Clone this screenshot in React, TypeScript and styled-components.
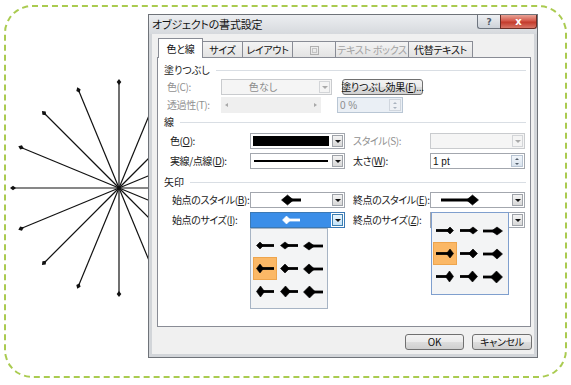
import React from 'react';
import styled, { createGlobalStyle } from 'styled-components';

const JP = `"Noto Sans CJK JP", "Noto Sans", sans-serif`;

const GlobalStyle = createGlobalStyle`
  html, body { margin: 0; padding: 0; background: #ffffff; }
  body { font-family: ${JP}; font-feature-settings: "palt"; }
  #root { width: 571px; height: 385px; overflow: hidden; }
  u { text-underline-offset: 1px; }
`;

const Frame = styled.div`
  box-sizing: border-box;
  margin: 5px 0 0 4px;
  width: 563px;
  height: 373px;
  border: 2px dashed #aacb50;
  border-radius: 28px;
  padding-top: 7px;
  display: flex;
  align-items: flex-start;
`;

const StarSvg = styled.svg`
  flex: none;
  display: block;
  width: 142px;
  height: 300px;
  overflow: visible;
`;

const StarFigure: React.FC = () => {
  const cx = 113;
  const cy = 174;
  const r = 106;
  const items = [];
  for (let i = 0; i < 16; i++) {
    const a = (i * Math.PI) / 8;
    const ux = Math.cos(a);
    const uy = -Math.sin(a);
    const x = cx + r * ux;
    const y = cy + r * uy;
    const px = -uy;
    const py = ux;
    const pts = [
      [x + ux * 3, y + uy * 3],
      [x + px * 2.3, y + py * 2.3],
      [x - ux * 3, y - uy * 3],
      [x - px * 2.3, y - py * 2.3],
    ]
      .map((p) => p.map((v) => v.toFixed(2)).join(','))
      .join(' ');
    items.push(
      <g key={i}>
        <line x1={cx} y1={cy} x2={x} y2={y} stroke="#111" strokeWidth={1.2} />
        <polygon points={pts} fill="#111" />
      </g>
    );
  }
  return <StarSvg viewBox="0 0 142 300">{items}</StarSvg>;
};

const Dialog = styled.div`
  position: relative;
  flex: none;
  box-sizing: border-box;
  width: 390px;
  height: 344px;
  border: 1px solid #6f7379;
  background: #d2d5d9;
  padding: 0 3px 3px;
  display: flex;
  flex-direction: column;
  font-family: ${JP};
`;

const TitleBar = styled.div`
  flex: none;
  height: 19px;
  margin: 0 -3px;
  padding-left: 3px;
  display: flex;
  align-items: flex-start;
  background: linear-gradient(#eceef1, #d6d9dd);
`;

const TitleText = styled.div`
  font-size: 11px;
  line-height: 19px;
  color: #141414;
  letter-spacing: -0.2px;
`;

const TitleButtons = styled.div`
  margin-left: auto;
  display: flex;
`;

const HelpButton = styled.div`
  box-sizing: border-box;
  width: 23px;
  height: 14px;
  border: 1px solid #6f7680;
  border-top: none;
  border-right: none;
  border-radius: 0 0 0 3px;
  background: linear-gradient(#eef0f3, #cdd2d9);
  color: #4f5966;
  font: bold 9px "DejaVu Sans", sans-serif;
  display: flex;
  align-items: center;
  justify-content: center;
`;

const CloseButton = styled.div`
  box-sizing: border-box;
  width: 37px;
  height: 14px;
  border: 1px solid #6b2c24;
  border-top: none;
  border-radius: 0 0 3px 0;
  background: linear-gradient(#e9a497, #d4584a 45%, #c33b2c 55%, #d87566);
  color: #ffffff;
  font: bold 10px "DejaVu Sans", sans-serif;
  display: flex;
  align-items: center;
  justify-content: center;
`;

const Body = styled.div`
  flex: 1;
  background: #f0f0f0;
  padding: 4px 3px 4px 5px;
  display: flex;
  flex-direction: column;
`;

const TabRow = styled.div`
  position: relative;
  z-index: 1;
  height: 20px;
  margin-bottom: -1px;
  padding-left: 1px;
  display: flex;
  align-items: flex-end;
`;

const Tab = styled.div<{ $w: number; $active?: boolean; $disabled?: boolean }>`
  box-sizing: border-box;
  flex: none;
  width: ${(p) => p.$w}px;
  height: ${(p) => (p.$active ? 20 : 17)}px;
  margin-right: -1px;
  border: 1px solid #898c95;
  border-bottom: ${(p) => (p.$active ? 'none' : '1px solid #898c95')};
  background: ${(p) => (p.$active ? '#ffffff' : 'linear-gradient(#f4f4f4, #e3e3e3)')};
  color: ${(p) => (p.$disabled ? '#a2a2a2' : '#111111')};
  font-size: 10px;
  line-height: 12px;
  letter-spacing: -0.3px;
  white-space: nowrap;
  display: flex;
  align-items: center;
  justify-content: center;
  padding-top: ${(p) => (p.$active ? 0 : 1)}px;
`;

const Panel = styled.div`
  position: relative;
  box-sizing: border-box;
  flex: none;
  width: 374px;
  height: 270px;
  border: 1px solid #898c95;
  background: #ffffff;
  padding: 5px 4px 0 6px;
  display: flex;
  flex-direction: column;
`;

const SectionHeading = styled.div<{ $mt: number }>`
  height: 14px;
  margin-top: ${(p) => p.$mt}px;
  display: flex;
  align-items: center;
  gap: 6px;
  font-size: 10px;
  line-height: 12px;
  color: #1a1a1a;
`;

const Rule = styled.div`
  flex: 1;
  height: 1px;
  background: #d9dee4;
`;

const Row = styled.div<{ $mt: number; $h?: number; $pl?: number }>`
  display: flex;
  align-items: center;
  height: ${(p) => p.$h ?? 16}px;
  margin-top: ${(p) => p.$mt}px;
  padding-left: ${(p) => p.$pl ?? 6}px;
`;

const Label = styled.div<{ $w: number; $disabled?: boolean; $pl?: number }>`
  flex: none;
  box-sizing: border-box;
  width: ${(p) => p.$w}px;
  padding-left: ${(p) => p.$pl ?? 0}px;
  font-size: 10px;
  line-height: 12px;
  letter-spacing: -0.4px;
  white-space: nowrap;
  color: ${(p) => (p.$disabled ? '#909090' : '#1a1a1a')};
`;

const Combo = styled.div<{ $w: number; $disabled?: boolean; $selected?: boolean }>`
  position: relative;
  flex: none;
  align-self: stretch;
  box-sizing: border-box;
  width: ${(p) => p.$w}px;
  display: flex;
  border: 1px solid ${(p) => (p.$disabled ? '#c9cbce' : p.$selected ? '#3b79b5' : '#a3a7ae')};
  background: ${(p) => (p.$disabled ? '#f5f5f5' : '#ffffff')};
`;

const ComboValue = styled.div<{ $disabled?: boolean; $selected?: boolean; $pr?: number }>`
  flex: 1;
  min-width: 0;
  display: flex;
  align-items: center;
  justify-content: center;
  padding-right: ${(p) => p.$pr ?? 0}px;
  background: ${(p) => (p.$selected ? '#3b8ee8' : 'transparent')};
  color: ${(p) => (p.$disabled ? '#8c8c8c' : '#111')};
  font-size: 10px;
  line-height: 12px;
`;

const DropButton = styled.div<{ $disabled?: boolean; $selected?: boolean }>`
  flex: none;
  box-sizing: border-box;
  width: 11px;
  margin: 1px;
  border: 1px solid ${(p) => (p.$disabled ? '#d3d5d8' : p.$selected ? '#3c7fb1' : '#9fa3a9')};
  background: ${(p) =>
    p.$disabled ? '#f4f4f4' : p.$selected ? 'linear-gradient(#eaf5fd, #c4e3f9)' : 'linear-gradient(#f4f4f4, #d8d8d8)'};
  display: flex;
  align-items: center;
  justify-content: center;
`;

const Caret = styled.div<{ $disabled?: boolean }>`
  width: 0;
  height: 0;
  border-left: 3px solid transparent;
  border-right: 3px solid transparent;
  border-top: 3px solid ${(p) => (p.$disabled ? '#a9a9a9' : '#111')};
`;

const Swatch = styled.div`
  flex: 1;
  align-self: stretch;
  margin: 2px;
  background: #000;
`;

const LineSample = styled.div`
  flex: 1;
  height: 2px;
  margin: 0 3px;
  background: #000;
`;

const PushButton = styled.div<{ $w: number; $ml?: number }>`
  flex: none;
  align-self: stretch;
  box-sizing: border-box;
  width: ${(p) => p.$w}px;
  margin-left: ${(p) => p.$ml ?? 0}px;
  border: 1px solid #707070;
  border-radius: 3px;
  background: linear-gradient(#f3f3f3, #ebebeb 50%, #dddddd 51%, #d0d0d0);
  font-size: 10px;
  line-height: 12px;
  letter-spacing: -0.3px;
  color: #111;
  white-space: nowrap;
  display: flex;
  align-items: center;
  justify-content: center;
`;

const Slider = styled.div<{ $w: number }>`
  flex: none;
  align-self: stretch;
  box-sizing: border-box;
  width: ${(p) => p.$w}px;
  background: #efefef;
  display: flex;
  align-items: center;
  justify-content: space-between;
  padding: 0 4px;
`;

const SlideArrow = styled.div<{ $dir: 'l' | 'r' }>`
  width: 0;
  height: 0;
  border-top: 2.5px solid transparent;
  border-bottom: 2.5px solid transparent;
  ${(p) => (p.$dir === 'l' ? 'border-right: 3px solid #a8a8a8;' : 'border-left: 3px solid #a8a8a8;')}
`;

const SpinBox = styled.div<{ $w: number; $ml?: number; $disabled?: boolean }>`
  flex: none;
  align-self: stretch;
  box-sizing: border-box;
  width: ${(p) => p.$w}px;
  margin-left: ${(p) => p.$ml ?? 0}px;
  border: 1px solid ${(p) => (p.$disabled ? '#b9c6d4' : '#a3a7ae')};
  background: ${(p) => (p.$disabled ? '#eaeff5' : '#ffffff')};
  display: flex;
`;

const SpinText = styled.div<{ $disabled?: boolean }>`
  flex: 1;
  padding-left: 2px;
  display: flex;
  align-items: center;
  font-family: "Liberation Sans", Arial, sans-serif;
  font-size: 10px;
  color: ${(p) => (p.$disabled ? '#8c8c8c' : '#111')};
`;

const SpinButtons = styled.div<{ $disabled?: boolean }>`
  flex: none;
  width: 10px;
  margin: 1px;
  display: flex;
  flex-direction: column;
  border: 1px solid ${(p) => (p.$disabled ? '#d0d6de' : '#b8c4d2')};
  background: ${(p) => (p.$disabled ? '#eef1f5' : 'linear-gradient(#f2f6fb, #d9e3ee)')};
`;

const SpinHalf = styled.div<{ $up?: boolean; $disabled?: boolean }>`
  flex: 1;
  display: flex;
  align-items: center;
  justify-content: center;
  &::after {
    content: '';
    width: 0;
    height: 0;
    border-left: 2px solid transparent;
    border-right: 2px solid transparent;
    ${(p) =>
      p.$up
        ? `border-bottom: 2px solid ${p.$disabled ? '#a9b3bf' : '#55606d'};`
        : `border-top: 2px solid ${p.$disabled ? '#a9b3bf' : '#55606d'};`}
  }
`;

const Popup = styled.div<{ $top: string; $left: number; $padY: number; $padL: number; $focus?: boolean }>`
  position: absolute;
  z-index: 5;
  top: ${(p) => p.$top};
  left: ${(p) => p.$left}px;
  box-sizing: border-box;
  width: 78px;
  padding: ${(p) => p.$padY}px 0 ${(p) => p.$padY}px ${(p) => p.$padL}px;
  border: 1px solid ${(p) => (p.$focus ? '#7f9fce' : '#a7b4c4')};
  background: #f3f4f5;
  display: grid;
  grid-template-columns: repeat(3, 24px);
  grid-auto-rows: 23px;
`;

const PopupCell = styled.div<{ $hot?: boolean }>`
  box-sizing: border-box;
  display: flex;
  align-items: center;
  justify-content: center;
  background: ${(p) => (p.$hot ? '#fbb866' : 'transparent')};
  border: 1px solid ${(p) => (p.$hot ? '#eea54d' : 'transparent')};
`;

const ButtonRow = styled.div`
  margin-top: 7px;
  margin-right: -1px;
  height: 16px;
  display: flex;
  justify-content: flex-end;
  gap: 8px;
`;

const DialogButton = styled.div<{ $w: number }>`
  box-sizing: border-box;
  width: ${(p) => p.$w}px;
  height: 16px;
  border: 1px solid #707070;
  border-radius: 3px;
  background: linear-gradient(#f3f3f3, #ebebeb 50%, #dddddd 51%, #cfcfcf);
  font-size: 10px;
  line-height: 12px;
  letter-spacing: -0.3px;
  color: #111;
  display: flex;
  align-items: center;
  justify-content: center;
`;

type GlyphProps = { side: 'start' | 'end'; L: number; H: number; w: number; color?: string; t?: number };

const ArrowGlyph: React.FC<GlyphProps> = ({ side, L, H, w, color = '#000', t = 2.8 }) => {
  const h = Math.max(H, t) + 2;
  const cy = h / 2;
  let poly: string;
  let x1: number;
  let x2: number;
  if (side === 'start') {
    poly = `0.5,${cy} ${L / 2 + 0.5},${cy - H / 2} ${L + 0.5},${cy} ${L / 2 + 0.5},${cy + H / 2}`;
    x1 = L / 2;
    x2 = w;
  } else {
    const e = w - 0.5;
    poly = `${e},${cy} ${e - L / 2},${cy - H / 2} ${e - L},${cy} ${e - L / 2},${cy + H / 2}`;
    x1 = 0;
    x2 = w - L / 2;
  }
  return (
    <svg width={w} height={h} viewBox={`0 0 ${w} ${h}`} style={{ display: 'block' }}>
      <line x1={x1} y1={cy} x2={x2} y2={cy} stroke={color} strokeWidth={t} />
      <polygon points={poly} fill={color} stroke={color} strokeWidth={0.6} strokeLinejoin="round" />
    </svg>
  );
};

const sizes = [
  [7, 7],
  [9, 7],
  [11, 8],
  [7, 9],
  [9, 9],
  [11, 10],
  [8, 11],
  [10, 11],
  [12, 12],
];

const SizeGrid: React.FC<{ side: 'start' | 'end' }> = ({ side }) => (
  <>
    {sizes.map(([L, H], i) => (
      <PopupCell key={i} $hot={i === 3}>
        <ArrowGlyph side={side} L={L} H={H} w={i % 3 === 2 ? 20 : 18} />
      </PopupCell>
    ))}
  </>
);

const DisabledTabIcon = () => (
  <svg width="9" height="9" viewBox="0 0 9 9" style={{ display: 'block' }}>
    <rect x="0.5" y="0.5" width="8" height="8" fill="none" stroke="#b0b0b0" />
    <rect x="2.5" y="2.5" width="4" height="4" fill="none" stroke="#c4c4c4" />
  </svg>
);

export default function App() {
  return (
    <>
      <GlobalStyle />
      <Frame>
        <StarFigure />
        <Dialog>
          <TitleBar>
            <TitleText>オブジェクトの書式設定</TitleText>
            <TitleButtons>
              <HelpButton>?</HelpButton>
              <CloseButton>x</CloseButton>
            </TitleButtons>
          </TitleBar>
          <Body>
            <TabRow>
              <Tab $w={45} $active>色と線</Tab>
              <Tab $w={41}>サイズ</Tab>
              <Tab $w={51}>レイアウト</Tab>
              <Tab $w={44} $disabled>
                <DisabledTabIcon />
              </Tab>
              <Tab $w={74} $disabled>テキスト ボックス</Tab>
              <Tab $w={65}>代替テキスト</Tab>
            </TabRow>
            <Panel>
              <SectionHeading $mt={0}>
                <span>塗りつぶし</span>
                <Rule />
              </SectionHeading>
              <Row $mt={2} $pl={3}>
                <Label $w={54} $disabled>色(C):</Label>
                <Combo $w={111} $disabled>
                  <ComboValue $disabled $pr={14}>色なし</ComboValue>
                  <DropButton $disabled>
                    <Caret $disabled />
                  </DropButton>
                </Combo>
                <PushButton $w={81} $ml={10}>
                  塗りつぶし効果(<u>F</u>)...
                </PushButton>
              </Row>
              <Row $mt={2} $pl={3}>
                <Label $w={54} $disabled>透過性(T):</Label>
                <Slider $w={100}>
                  <SlideArrow $dir="l" />
                  <SlideArrow $dir="r" />
                </Slider>
                <SpinBox $w={66} $ml={16} $disabled>
                  <SpinText $disabled>0 %</SpinText>
                  <SpinButtons $disabled>
                    <SpinHalf $up $disabled />
                    <SpinHalf $disabled />
                  </SpinButtons>
                </SpinBox>
              </Row>

              <SectionHeading $mt={2}>
                <span>線</span>
                <Rule />
              </SectionHeading>
              <Row $mt={4}>
                <Label $w={80}>
                  色(<u>O</u>):
                </Label>
                <Combo $w={95}>
                  <Swatch />
                  <DropButton>
                    <Caret />
                  </DropButton>
                </Combo>
                <Label $w={85} $pl={8} $disabled>
                  スタイル(S):
                </Label>
                <Combo $w={95} $disabled>
                  <ComboValue $disabled />
                  <DropButton $disabled>
                    <Caret $disabled />
                  </DropButton>
                </Combo>
              </Row>
              <Row $mt={4}>
                <Label $w={80}>
                  実線/点線(<u>D</u>):
                </Label>
                <Combo $w={95}>
                  <ComboValue>
                    <LineSample />
                  </ComboValue>
                  <DropButton>
                    <Caret />
                  </DropButton>
                </Combo>
                <Label $w={85} $pl={8}>
                  太さ(<u>W</u>):
                </Label>
                <SpinBox $w={95}>
                  <SpinText>1 pt</SpinText>
                  <SpinButtons>
                    <SpinHalf $up />
                    <SpinHalf />
                  </SpinButtons>
                </SpinBox>
              </Row>

              <SectionHeading $mt={6}>
                <span>矢印</span>
                <Rule />
              </SectionHeading>
              <Row $mt={3}>
                <Label $w={80} $pl={2}>
                  始点のスタイル(<u>B</u>):
                </Label>
                <Combo $w={95}>
                  <ComboValue>
                    <ArrowGlyph side="start" L={12} H={10} w={20} t={3} />
                  </ComboValue>
                  <DropButton>
                    <Caret />
                  </DropButton>
                </Combo>
                <Label $w={85} $pl={8}>
                  終点のスタイル(<u>E</u>):
                </Label>
                <Combo $w={95}>
                  <ComboValue $pr={22}>
                    <ArrowGlyph side="end" L={12} H={10} w={38} t={3} />
                  </ComboValue>
                  <DropButton>
                    <Caret />
                  </DropButton>
                </Combo>
              </Row>
              <Row $mt={4}>
                <Label $w={80} $pl={2}>
                  始点のサイズ(<u>I</u>):
                </Label>
                <Combo $w={95} $selected>
                  <ComboValue $selected>
                    <ArrowGlyph side="start" L={8} H={8} w={18} color="#ffffff" t={2.8} />
                  </ComboValue>
                  <DropButton $selected>
                    <Caret />
                  </DropButton>
                  <Popup $top="calc(100% + 1px)" $left={-1} $padY={5} $padL={2}>
                    <SizeGrid side="start" />
                  </Popup>
                </Combo>
                <Label $w={85} $pl={8}>
                  終点のサイズ(<u>Z</u>):
                </Label>
                <Combo $w={95}>
                  <ComboValue />
                  <DropButton>
                    <Caret />
                  </DropButton>
                  <Popup $top="-1px" $left={0} $padY={6} $padL={1} $focus>
                    <SizeGrid side="end" />
                  </Popup>
                </Combo>
              </Row>
            </Panel>
            <ButtonRow>
              <DialogButton $w={59}>OK</DialogButton>
              <DialogButton $w={60}>キャンセル</DialogButton>
            </ButtonRow>
          </Body>
        </Dialog>
      </Frame>
    </>
  );
}
